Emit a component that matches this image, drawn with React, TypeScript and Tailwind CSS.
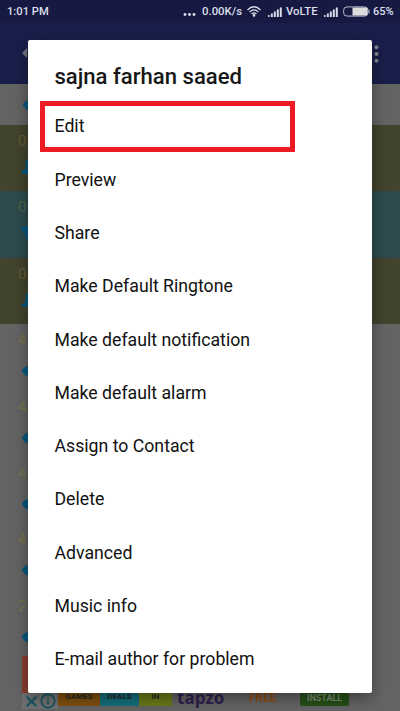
import { X, Info } from "lucide-react";

const MENU_ITEMS = [
    "Edit",
    "Preview",
    "Share",
    "Make Default Ringtone",
    "Make default notification",
    "Make default alarm",
    "Assign to Contact",
    "Delete",
    "Advanced",
    "Music info",
    "E-mail author for problem",
];

const DOT = "M4 3Q6 2 12 2V14H6Q3 13 0 8Q1 5 4 3Z";
const BELL = "M5 0H12V16H0V13L4 10Z";
const PHONE = "M0 1L4 0H12V16H6Q4 9 0 5Z";

const TRACKS = [
    { label: "0", bg: "bg-[#43442d]", color: "text-[#625d37]", icon: BELL },
    { label: "0", bg: "bg-[#2d4b4e]", color: "text-[#506247]", icon: PHONE },
    { label: "0", bg: "bg-[#43442d]", color: "text-[#625d37]", icon: BELL },
    { label: "4", bg: "bg-[#646464]", color: "text-[#7b7450]", icon: DOT },
    { label: "4", bg: "bg-[#646464]", color: "text-[#7b7450]", icon: DOT },
    { label: "4", bg: "bg-[#646464]", color: "text-[#7b7450]", icon: DOT },
    { label: "4", bg: "bg-[#646464]", color: "text-[#7b7450]", icon: DOT },
    { label: "2", bg: "bg-[#646464]", color: "text-[#7b7450]", icon: DOT },
];

function Signal() {
    return (
        <svg className="h-[10px] w-[14px] shrink-0" viewBox="0 0 14 10" fill="#d9dbe8">
            <rect x="0" y="8" width="1.5" height="2" />
            <rect x="2.8" y="6.5" width="2" height="3.5" />
            <rect x="5.8" y="4.5" width="2" height="5.5" />
            <rect x="8.8" y="2.5" width="2" height="7.5" />
            <rect x="11.8" y="0.5" width="2" height="9.5" />
        </svg>
    );
}

function StatusBar() {
    return (
        <div className="flex h-[23px] shrink-0 items-center bg-[#161a42] pl-[7px] text-[11.4px] font-medium leading-none text-[#dddfea]">
            <span className="w-[176px] shrink-0 text-[11.2px]">1:01 PM</span>
            <svg className="mt-[6px] h-[3px] w-[13px] shrink-0" viewBox="0 0 13 3" fill="#dddfea">
                <circle cx="2" cy="1.5" r="1.4" />
                <circle cx="6.5" cy="1.5" r="1.4" />
                <circle cx="11" cy="1.5" r="1.4" />
            </svg>
            <span className="ml-[6px] w-[45px] shrink-0 whitespace-nowrap">0.00K/s</span>
            <svg
                className="h-[11px] w-[14px] shrink-0"
                viewBox="0 0 14 11"
                fill="none"
                stroke="#dddfea"
                strokeWidth="1.2"
            >
                <path d="M.5 4Q7-2.5 13.5 4M2.6 6.1Q7 1.6 11.4 6.1M4.6 8.1Q7 5.6 9.4 8.1" />
                <circle cx="7" cy="9.4" r=".7" fill="#dddfea" />
            </svg>
            <span className="ml-[7px] flex shrink-0"><Signal /></span>
            <span className="ml-[4px] w-[38px] shrink-0">VoLTE</span>
            <Signal />
            <svg className="ml-[5px] h-[11px] w-[27px] shrink-0" viewBox="0 0 27 11">
                <rect x=".6" y=".9" width="24.4" height="9.2" rx="3.5" fill="none" stroke="#b8bace" />
                <path d="M9.5 1.6H22Q24.6 1.6 24.6 4V7Q24.6 9.4 22 9.4H9.5Z" fill="#dcdcdf" />
                <path d="M26 3.5V7.5" stroke="#b8bace" />
            </svg>
            <span className="ml-[3px] text-[11px]">65%</span>
        </div>
    );
}

function AdBanner() {
    return (
        <div className="relative ml-[22px] flex h-[55px] shrink-0 overflow-hidden">
            <div className="h-[38px] w-[9px] bg-[#8a3f30]" />
            <div className="absolute bottom-[5px] left-0 flex w-full items-end">
                <div className="-mb-[3px] flex h-[16px] w-[36px] items-center bg-[#6f7273] pl-[1px] text-[#185663]">
                    <X size={17} strokeWidth={3} />
                    <Info size={16} strokeWidth={2.6} />
                </div>
                <div className="flex h-[13px] text-center text-[9px] font-bold leading-[7px] text-[#272622]">
                    <div className="w-[42px] bg-[#80500f] text-[8px]">GAMES</div>
                    <div className="w-[39px] bg-[#136f7b] text-[8px]">DEALS</div>
                    <div className="w-[33px] bg-[#6a7a18] text-[8px]">IN</div>
                </div>
                <span className="ml-[5px] w-[51px] font-['Open_Sans',sans-serif] text-[17px] font-bold leading-[16px] text-[#30214f]">
                    tapzo
                </span>
                <span className="ml-[21px] w-[51px] text-[12px] font-bold leading-[16px] text-[#8c4d16]">FREE</span>
                <span className="h-[14px] w-[49px] rounded-b-[2px] bg-[#255016] text-center text-[9px] font-bold leading-[13px] text-[#7b8d75]">
                    INSTALL
                </span>
            </div>
        </div>
    );
}

function Background() {
    return (
        <div className="flex h-[711px] flex-col bg-[#646464]">
            <StatusBar />
            <div className="flex h-[61px] shrink-0 items-center justify-between bg-[#191f4b] pl-[22px] pr-[21px]">
                <svg className="mb-[1px] h-[10px] w-[6px]" viewBox="0 0 6 10" fill="#77777f">
                    <path d="M0 5L5 0V10Z" />
                </svg>
                <svg className="h-[18px] w-[5px]" viewBox="0 0 5 18" fill="#85878f">
                    <circle cx="2.5" cy="2.2" r="2" />
                    <circle cx="2.5" cy="9" r="2" />
                    <circle cx="2.5" cy="15.8" r="2" />
                </svg>
            </div>
            <div className="h-[41px] shrink-0 pl-[22px] pt-[14px]">
                <svg className="h-[14px] w-[12px]" viewBox="0 0 12 16" fill="#0a587d">
                    <path d={DOT} />
                </svg>
            </div>
            {TRACKS.map((track, idx) => (
                <div key={idx} className={`h-[66.4px] shrink-0 pl-[18px] pt-[7px] ${track.bg}`}>
                    <p className={`text-[15px] leading-[18px] ${track.color}`}>{track.label}</p>
                    <svg
                        className={`ml-[3px] h-[14px] w-[12px] ${track.icon === DOT ? "mt-[15px]" : "mt-[10px]"}`}
                        viewBox="0 0 12 16"
                        fill="#0a587d"
                    >
                        <path d={track.icon} />
                    </svg>
                </div>
            ))}
            <AdBanner />
        </div>
    );
}

export default function App() {
    return (
        <div className="relative h-[711px] w-[400px] overflow-hidden font-[Roboto,sans-serif]">
            <Background />

            {/* Track menu */}
            <div className="absolute left-[28px] top-[40px] h-[653px] w-[344px] rounded-[2px] bg-white shadow-[0_5px_16px_rgba(0,0,0,0.4)]">
                <h1 className="h-[60px] pl-[26.5px] pt-[22px] text-[22.1px] font-medium leading-[28px] text-[#171717]">
                    sajna farhan saaed
                </h1>
                <ul className="text-[17.7px] text-[#111111]">
                    {MENU_ITEMS.map((item) => (
                        <li key={item} className="flex h-[53.3px] items-center pl-[26.5px]">
                            {item}
                        </li>
                    ))}
                </ul>
            </div>

            {/* Highlight around the first item */}
            <div className="absolute left-[40px] top-[101px] h-[51px] w-[255px] border-[5px] border-[#ed1c24]" />
        </div>
    );
}
